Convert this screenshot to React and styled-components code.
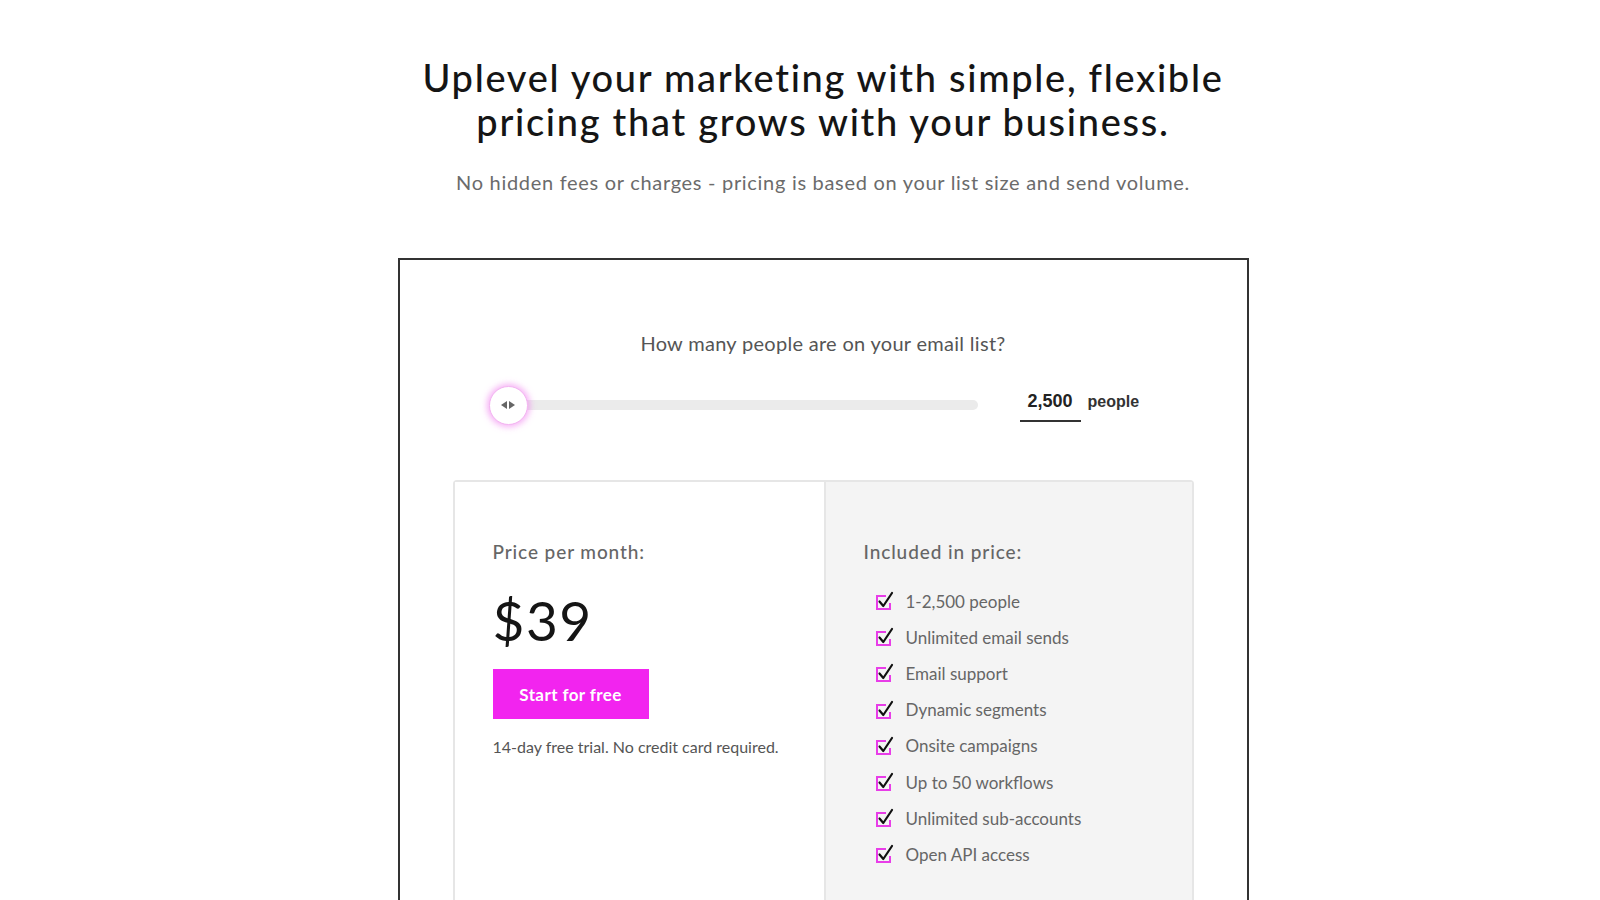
import React, { useState } from 'react'
import styled, { createGlobalStyle } from 'styled-components'

const GlobalStyle = createGlobalStyle`
  body {
    margin: 0;
    background: #fff;
    font-family: Lato, "Noto Sans", sans-serif;
    color: #1a1a1a;
  }
`

const Page = styled.div`
  padding: 55px 0 0 46px;
  display: flex;
  flex-direction: column;
  align-items: center;
  height: 900px;
  box-sizing: border-box;
  overflow: hidden;
`

const Title = styled.h1`
  margin: 0;
  font-size: 38px;
  font-weight: 500;
  line-height: 44px;
  text-align: center;
  letter-spacing: 1.7px;
  color: #151515;
`

const Subtitle = styled.p`
  margin: 27px 0 0;
  font-size: 20px;
  letter-spacing: 0.7px;
  color: #6b6b6b;
  text-align: center;
`

const Card = styled.section`
  margin-top: 64px;
  width: 851px;
  box-sizing: border-box;
  border: 2px solid #333;
  border-bottom: none;
  padding: 71px 53px 0;
`

const Question = styled.p`
  margin: 0;
  text-align: center;
  font-size: 20px;
  letter-spacing: 0.3px;
  line-height: 24px;
  color: #555;
`

const SliderRow = styled.div`
  display: flex;
  align-items: center;
  padding-left: 36px;
  margin-top: 30px;
  height: 40px;
`

const Track = styled.div`
  position: relative;
  width: 489px;
  height: 10px;
  display: flex;
  align-items: center;
  &::before {
    content: '';
    position: absolute;
    left: 18px;
    right: 0;
    top: 0;
    bottom: 0;
    border-radius: 5px;
    background: #ebebeb;
  }
`

const Thumb = styled.div`
  position: relative;
  width: 39px;
  height: 39px;
  border-radius: 50%;
  background: #fff;
  border: 1px solid #f3b4f1;
  box-sizing: border-box;
  box-shadow: 0 0 6px 2px rgba(238, 110, 236, 0.55);
  display: flex;
  align-items: center;
  justify-content: center;
  gap: 2px;
`

const Arrow = styled.span`
  width: 0;
  height: 0;
  border-top: 4.5px solid transparent;
  border-bottom: 4.5px solid transparent;
  ${({ dir }) =>
    dir === 'left'
      ? 'border-right: 6px solid #666;'
      : 'border-left: 6px solid #666;'}
`

const CountInput = styled.input`
  margin-left: 42px;
  margin-top: 2px;
  width: 61px;
  box-sizing: border-box;
  border: none;
  border-bottom: 2px solid #333;
  padding: 0 0 8px;
  font-family: "Liberation Sans", Arial, sans-serif;
  font-size: 18px;
  font-weight: 700;
  color: #222;
  text-align: center;
  background: transparent;
  outline: none;
`

const Unit = styled.span`
  margin-left: 7px;
  font-family: "Liberation Sans", Arial, sans-serif;
  font-size: 16px;
  font-weight: 700;
  color: #333;
  margin-bottom: 6px;
`

const Panel = styled.div`
  margin-top: 55px;
  display: grid;
  grid-template-columns: 369px 1fr;
  border: 2px solid #e6e6e6;
  border-bottom: none;
  border-radius: 4px 4px 0 0;
  min-height: 440px;
`

const Column = styled.div`
  padding: 58px 38px 0;
  background: ${({ $shaded }) => ($shaded ? '#f4f4f4' : '#fff')};
  ${({ $shaded }) => $shaded && 'border-left: 2px solid #e6e6e6;'}
`

const Label = styled.h3`
  margin: 0;
  font-size: 19px;
  font-weight: 500;
  letter-spacing: 0.9px;
  line-height: 24px;
  color: #666;
`

const Price = styled.div`
  margin-top: 26px;
  font-size: 55px;
  line-height: 60px;
  color: #151515;
  letter-spacing: 1.5px;
`

const CTA = styled.button`
  margin-top: 19px;
  width: 156px;
  height: 50px;
  border: none;
  background: #f224ef;
  color: #fff;
  font-family: inherit;
  font-size: 17px;
  letter-spacing: 0.4px;
  font-weight: 700;
  cursor: pointer;
`

const Note = styled.p`
  margin: 18px 0 0;
  font-size: 16px;
  color: #555;
`

const Features = styled.ul`
  list-style: none;
  margin: 19px 0 0;
  padding: 0 0 0 11px;
`

const Feature = styled.li`
  display: flex;
  align-items: center;
  gap: 11px;
  height: 36.2px;
  font-size: 17px;
  color: #666;
`

const CheckIcon = () => (
  <svg width="20" height="20" viewBox="0 0 20 20">
    <path d="M11 5H2v13h13v-6" fill="none" stroke="#e83de8" strokeWidth="2" />
    <path d="M4.5 10.5l3.8 4.5L17 2" fill="none" stroke="#111" strokeWidth="2.2" strokeLinecap="round" strokeLinejoin="round" />
  </svg>
)

const features = [
  '1-2,500 people',
  'Unlimited email sends',
  'Email support',
  'Dynamic segments',
  'Onsite campaigns',
  'Up to 50 workflows',
  'Unlimited sub-accounts',
  'Open API access',
]

export default function App() {
  const [count, setCount] = useState('2,500')
  return (
    <>
      <GlobalStyle />
      <Page>
        <Title>
          Uplevel your marketing with simple, flexible
          <br />
          pricing that grows with your business.
        </Title>
        <Subtitle>
          No hidden fees or charges - pricing is based on your list size and send volume.
        </Subtitle>
        <Card>
          <Question>How many people are on your email list?</Question>
          <SliderRow>
            <Track>
              <Thumb>
                <Arrow dir="left" />
                <Arrow dir="right" />
              </Thumb>
            </Track>
            <CountInput value={count} onChange={(e) => setCount(e.target.value)} />
            <Unit>people</Unit>
          </SliderRow>
          <Panel>
            <Column>
              <Label>Price per month:</Label>
              <Price>$39</Price>
              <CTA>Start for free</CTA>
              <Note>14-day free trial. No credit card required.</Note>
            </Column>
            <Column $shaded>
              <Label>Included in price:</Label>
              <Features>
                {features.map((f) => (
                  <Feature key={f}>
                    <CheckIcon />
                    {f}
                  </Feature>
                ))}
              </Features>
            </Column>
          </Panel>
        </Card>
      </Page>
    </>
  )
}
